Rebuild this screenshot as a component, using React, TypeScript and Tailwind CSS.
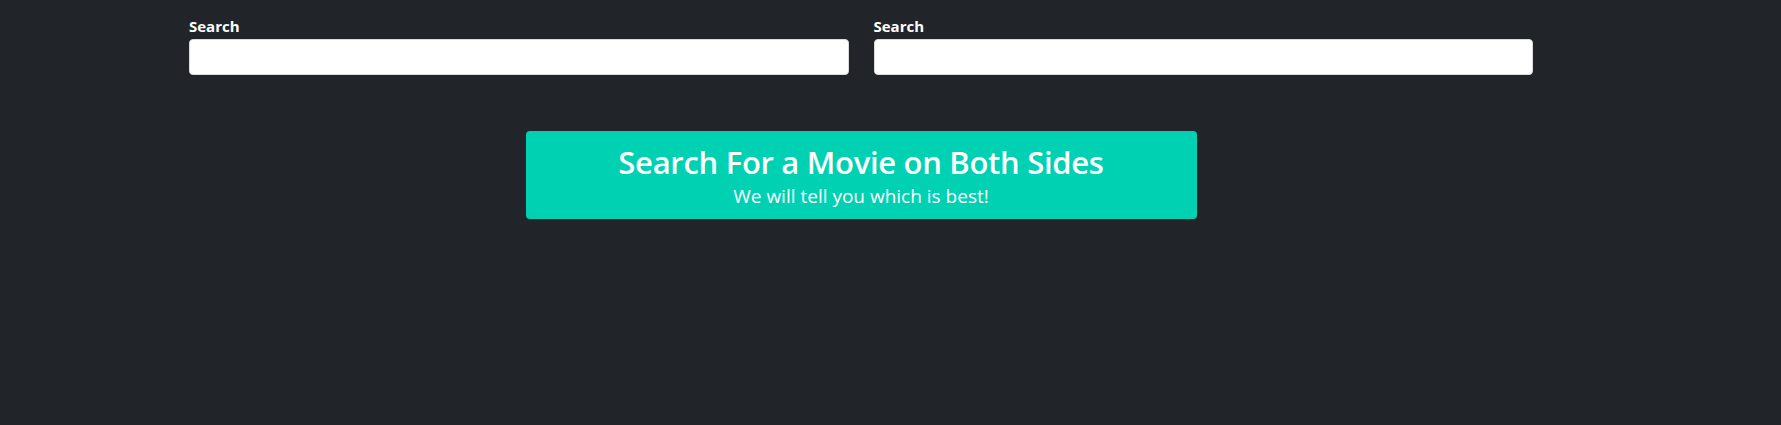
import React from 'react';

function SearchField() {
  return (
    <div className="flex flex-col">
      <label className="text-[15px] font-bold leading-[22px] text-white">Search</label>
      <input
        type="text"
        className="mt-[2px] h-9 w-full rounded-[4px] border border-[#dbdbdb] bg-white px-3 text-base text-[#363636] outline-none"
      />
    </div>
  );
}

export default function App() {
  return (
    <div
      className="min-h-[425px] w-full bg-[#212529]"
      style={{ fontFamily: '"Open Sans", "Noto Sans", sans-serif' }}
    >
      <div className="ml-[189px] w-[1344px] pt-[15px]">
        <div className="grid grid-cols-2 gap-[25px]">
          <SearchField />
          <SearchField />
        </div>
        <div className="mt-[56px] flex justify-center">
          <div className="flex h-[88px] w-[671px] flex-col items-center justify-center rounded-[4px] bg-[#00d1b2] pt-[2px] text-white">
            <h1 className="text-[31px] font-semibold leading-[38px] tracking-[-0.3px]">Search For a Movie on Both Sides</h1>
            <p className="mt-[2px] text-[19px] leading-[26px]">We will tell you which is best!</p>
          </div>
        </div>
      </div>
    </div>
  );
}
